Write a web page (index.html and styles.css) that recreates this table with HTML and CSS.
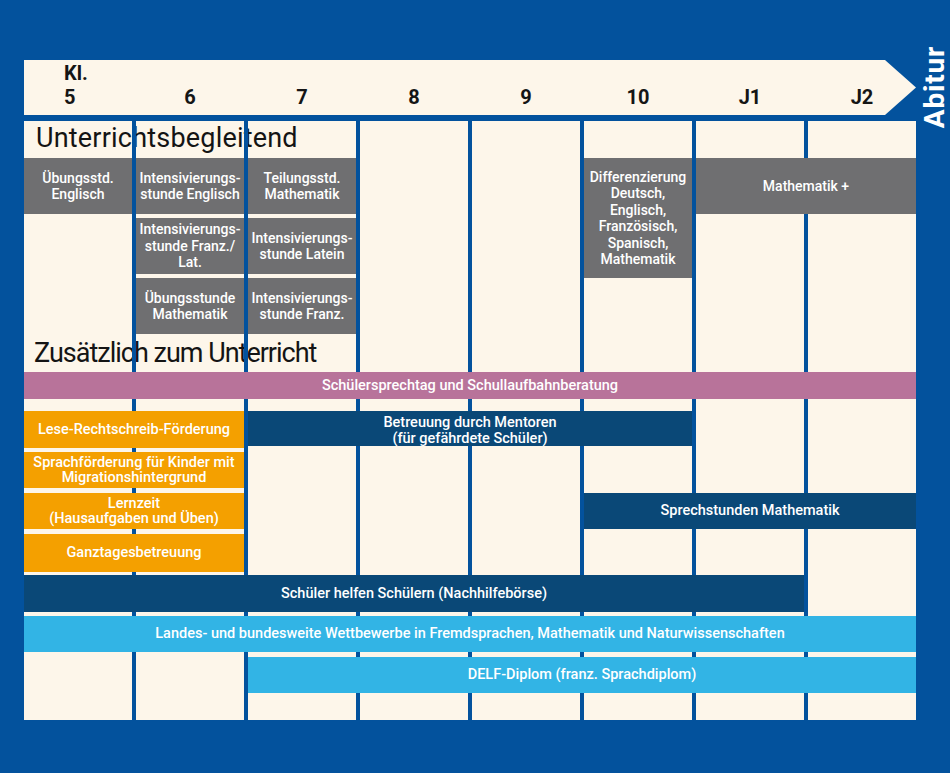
FILE: index.html
```html
<!DOCTYPE html>
<html lang="de">
<head>
<meta charset="utf-8">
<title>Förderangebote Kl. 5 bis Abitur</title>
<link rel="stylesheet" href="styles.css">
</head>
<body>
<div class="page">
  <div class="top">
    <div class="arrow">
      <div class="grade grade-first"><span>Kl.<br>5</span></div>
      <div class="grade">6</div>
      <div class="grade">7</div>
      <div class="grade">8</div>
      <div class="grade">9</div>
      <div class="grade">10</div>
      <div class="grade">J1</div>
      <div class="grade">J2</div>
    </div>
    <div class="abitur">Abitur</div>
  </div>

  <div class="chart">
    <div class="strip s1"></div>
    <div class="strip s2"></div>
    <div class="strip s3"></div>
    <div class="strip s4"></div>
    <div class="strip s5"></div>
    <div class="strip s6"></div>
    <div class="strip s7"></div>
    <div class="strip s8"></div>

    <div class="heading heading-begleit">Unterrichtsbegleitend</div>

    <div class="box grey ueb-en">Übungsstd.<br>Englisch</div>
    <div class="box grey int-en">Intensivierungs-<br>stunde Englisch</div>
    <div class="box grey teil-ma">Teilungsstd.<br>Mathematik</div>
    <div class="box grey diff">Differenzierung<br>Deutsch,<br>Englisch,<br>Französisch,<br>Spanisch,<br>Mathematik</div>
    <div class="box grey ma-plus">Mathematik +</div>
    <div class="box grey int-frlat">Intensivierungs-<br>stunde Franz./<br>Lat.</div>
    <div class="box grey int-lat">Intensivierungs-<br>stunde Latein</div>
    <div class="box grey ueb-ma">Übungsstunde<br>Mathematik</div>
    <div class="box grey int-fr">Intensivierungs-<br>stunde Franz.</div>

    <div class="heading heading-zusatz">Zusätzlich zum Unterricht</div>

    <div class="bar pink sprechtag">Schülersprechtag und Schullaufbahnberatung</div>
    <div class="bar orange lrs">Lese-Rechtschreib-Förderung</div>
    <div class="bar navy mentoren">Betreuung durch Mentoren<br>(für gefährdete Schüler)</div>
    <div class="bar orange sprach">Sprachförderung für Kinder mit<br>Migrationshintergrund</div>
    <div class="bar orange lernzeit">Lernzeit<br>(Hausaufgaben und Üben)</div>
    <div class="bar navy sprechstunden">Sprechstunden Mathematik</div>
    <div class="bar orange ganztag">Ganztagesbetreuung</div>
    <div class="bar navy nachhilfe">Schüler helfen Schülern (Nachhilfebörse)</div>
    <div class="bar sky wettbewerbe">Landes- und bundesweite Wettbewerbe in Fremdsprachen, Mathematik und Naturwissenschaften</div>
    <div class="bar sky delf">DELF-Diplom (franz. Sprachdiplom)</div>
  </div>
</div>
</body>
</html>
```

FILE: styles.css
```css
* { box-sizing: border-box; }

html, body {
  margin: 0;
  padding: 0;
}

body {
  width: 950px;
  height: 773px;
  overflow: hidden;
  background: #03529d;
  font-family: Roboto, "Liberation Sans", sans-serif;
}

.page {
  padding: 60px 0 0 24px;
}

/* ---------- top arrow ---------- */
.top {
  display: flex;
  align-items: center;
  height: 55px;
}

.arrow {
  width: 892px;
  height: 55px;
  flex: none;
  background: #fdf6ea;
  clip-path: polygon(0 0, 861px 0, 100% 50%, 861px 100%, 0 100%);
  display: grid;
  grid-template-columns: repeat(8, 108px);
  column-gap: 4px;
}

.grade {
  display: flex;
  align-items: flex-end;
  justify-content: center;
  padding-bottom: 6px;
  font-size: 20px;
  line-height: 24px;
  font-weight: 700;
  color: #151515;
}

.grade-first span {
  display: inline-block;
  text-align: left;
  margin-right: 4px;
}

.abitur {
  writing-mode: vertical-rl;
  transform: rotate(180deg);
  margin-left: 9px;
  color: #fff;
  font-size: 28px;
  font-weight: 700;
  letter-spacing: 0.8px;
  line-height: 20px;
}

/* ---------- chart grid ---------- */
.chart {
  margin-top: 6px;
  width: 892px;
  display: grid;
  grid-template-columns: repeat(8, 108px);
  column-gap: 4px;
  grid-template-rows:
    37px 56px 4px 56px 4px 56px 38px 27px 12px
    37px 4px 36px 5px 36px 5px 38px 3px 37px 4px 36px 5px 36px 27px;
}

.strip {
  grid-row: 1 / -1;
  background: #fdf6ea;
}
.s1 { grid-column: 1; }
.s2 { grid-column: 2; }
.s3 { grid-column: 3; }
.s4 { grid-column: 4; }
.s5 { grid-column: 5; }
.s6 { grid-column: 6; }
.s7 { grid-column: 7; }
.s8 { grid-column: 8; }

.heading {
  position: relative;
  grid-column: 1 / -1;
  padding-left: 12px;
  font-size: 27px;
  line-height: 34px;
  font-weight: 400;
  letter-spacing: 0.2px;
  color: #141414;
}
.heading::after {
  content: "";
  position: absolute;
  inset: 0;
  background: repeating-linear-gradient(to right, transparent 0 108px, #03529d 108px 112px);
}
.heading-begleit { grid-row: 1; }
.heading-zusatz {
  grid-row: 7;
  padding-top: 2px;
  padding-left: 10px;
  letter-spacing: -1px;
}

.box, .bar {
  display: flex;
  align-items: center;
  justify-content: center;
  text-align: center;
  color: #fff;
  font-weight: 500;
  white-space: nowrap;
}

.box { font-size: 14px; line-height: 16.5px; }
.bar { font-size: 14.5px; line-height: 15.5px; }

.grey { background: #6f6f71; }
.pink { background: #b8739a; }
.orange { background: #f4a000; }
.navy { background: #0a4877; }
.sky { background: #32b4e5; }

.ueb-en   { grid-row: 2; grid-column: 1; }
.int-en   { grid-row: 2; grid-column: 2; }
.teil-ma  { grid-row: 2; grid-column: 3; }
.diff     { grid-row: 2 / 6; grid-column: 6; }
.ma-plus  { grid-row: 2; grid-column: 7 / 9; }
.int-frlat{ grid-row: 4; grid-column: 2; }
.int-lat  { grid-row: 4; grid-column: 3; }
.ueb-ma   { grid-row: 6; grid-column: 2; }
.int-fr   { grid-row: 6; grid-column: 3; }

.sprechtag     { grid-row: 8; grid-column: 1 / -1; }
.lrs           { grid-row: 10; grid-column: 1 / 3; }
.mentoren      { grid-row: 10; grid-column: 3 / 7; margin-bottom: 2px; padding-top: 4px; }
.sprach        { grid-row: 12; grid-column: 1 / 3; }
.lernzeit      { grid-row: 14; grid-column: 1 / 3; }
.sprechstunden { grid-row: 14; grid-column: 6 / -1; }
.ganztag       { grid-row: 16; grid-column: 1 / 3; }
.nachhilfe     { grid-row: 18; grid-column: 1 / 8; }
.wettbewerbe   { grid-row: 20; grid-column: 1 / -1; }
.delf          { grid-row: 22; grid-column: 3 / -1; }
```
